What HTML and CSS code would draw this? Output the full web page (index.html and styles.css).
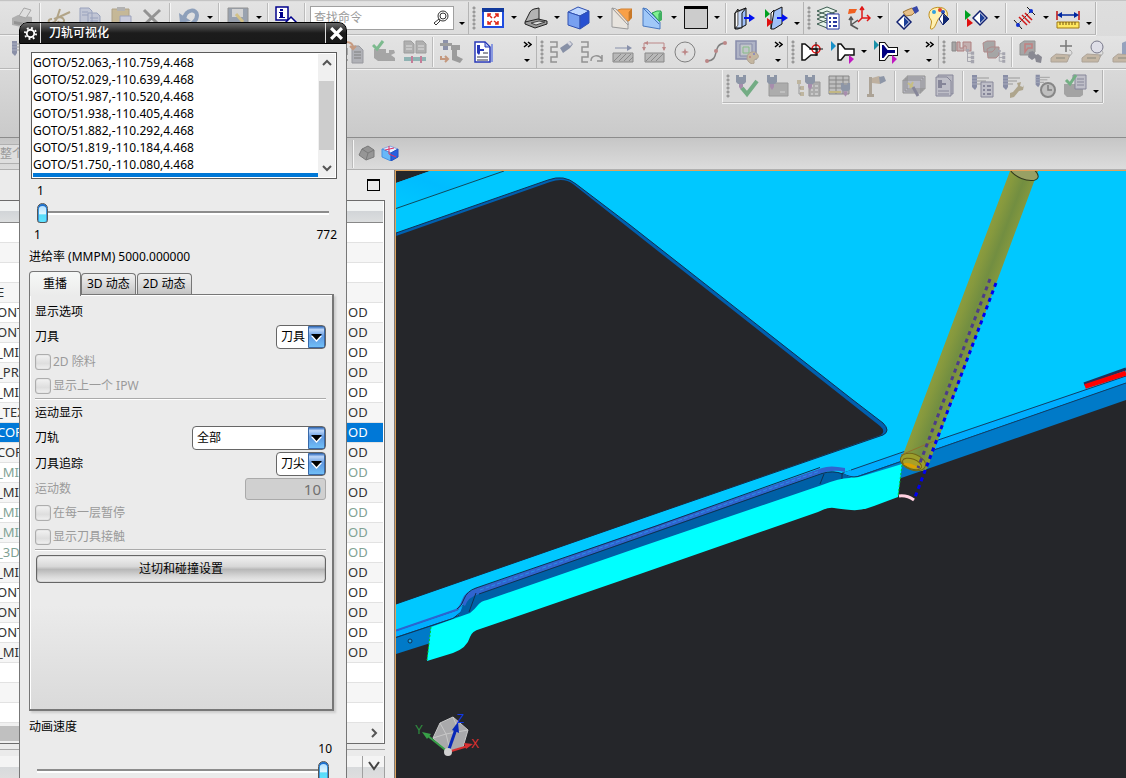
FILE: index.html
```
<!DOCTYPE html>
<html lang="zh-CN">
<head>
    <meta charset="UTF-8">
    <meta name="viewport" content="width=device-width, initial-scale=1.0">
    <title>刀轨可视化</title>
    <link rel="stylesheet" href="styles.css">
</head>
<body>
<svg class="defs" aria-hidden="true">
    <symbol id="caret" viewBox="0 0 6 4"><path d="M0 0h6L3 3z"/></symbol>
    <symbol id="more" viewBox="0 0 9 7"><path fill="none" stroke="#000" stroke-width="1.5" d="M1 1l3 2.500L1 6M5 1l3 2.500L5 6"/></symbol>
    <symbol id="mill" viewBox="0 0 24 24"><path fill="#506080" d="M1 1h3v2h4V1h3v7l-2 2H3L1 8z"/><path fill="#80508a" d="M4 10h4v3l-2 3-2-3z"/></symbol>
    <symbol id="spindle" viewBox="0 0 24 24"><path fill="#46507c" d="M2 1h5v12l-2 3-3-3z"/><path stroke="#8088a8" d="M2 4h5M2 7h5M2 10h5"/><path stroke="#666" d="M7 4h12M7 7h9M7 10h5"/></symbol>
    <symbol id="page" viewBox="0 0 24 24"><path fill="#8c8e98" stroke="#60626c" d="M2 1h7l4 4v13H2z"/><path stroke="#333" d="M4 7h7M4 10h7M4 13h7"/></symbol>
    <symbol id="snake" viewBox="0 0 24 24"><path fill="none" stroke="#555" stroke-width="1.5" d="M1 2h7v5H2v5h6v5H2v5h6"/></symbol>
    <symbol id="diamond" viewBox="0 0 24 24"><path fill="#fff" stroke="#102070" stroke-width="1.5" d="M8 1l7 7-7 7-7-7z"/><path fill="#1c3f98" d="M8 3l5 5-5 5z"/></symbol>
    <symbol id="tree" viewBox="0 0 24 24"><path fill="none" stroke="#667" d="M3 1v14M3 5h5M3 10h5M3 15h5"/><path fill="#778" d="M1 0h4v3H1zM7 3h4v4H7zM7 8h4v4H7zM7 13h4v4H7z"/></symbol>
    <symbol id="tag" viewBox="0 0 24 24"><path fill="#b09878" stroke="#867460" d="M1 18l5-4 14 1-3 7H1z"/><path stroke="#443" d="M6 18h9"/><path fill="none" stroke="#777" d="M18 16c6-1 4-6 1-6"/></symbol>
</svg>

<div class="app">
    <header class="toolbars">
        <div class="row">
            <div class="toolbar main">
                <button class="tool off" aria-label="打印"><svg viewBox="0 0 24 24"><path fill="#888" d="M2 12l6-3 14 2v6l-6 5-14-3z"/><path fill="#ddd" stroke="#777" d="M9 10l5-8 7 2-5 8z"/><path fill="#555" d="M4 15l11 2v3L4 18z"/></svg></button>
                <i class="sep"></i>
                <button class="tool off" aria-label="剪切"><svg viewBox="0 0 24 24"><path fill="none" stroke="#8c7440" stroke-width="2" d="M5 13c-5 0-4 5 0 4s4-3 5-5l3-9M10 12l13-6M7 13c5-3 9-2 10 1s-5 4-6 1"/></svg></button>
                <button class="tool off" aria-label="复制"><svg viewBox="0 0 24 24"><path fill="#a8b0cc" stroke="#6070a0" d="M2 2h9l3 3v12H2zM10 7h9l3 3v12H10z"/><path stroke="#6070a0" d="M4 6h6M4 9h6M12 12h8M12 15h8M12 18h8"/></svg></button>
                <button class="tool off" aria-label="粘贴"><svg viewBox="0 0 24 24"><path fill="#b0985c" stroke="#887040" d="M3 3h17v19H3z"/><path fill="#8c8c8c" d="M8 1h8v4H8z"/><path fill="#b8bcd8" stroke="#6670a0" d="M11 10h11v12H11z"/></svg></button>
                <button class="tool off" aria-label="删除"><svg viewBox="0 0 24 24"><path fill="none" stroke="#555" stroke-width="3" d="M4 4l15 15M20 4L4 19"/></svg></button>
                <i class="sep"></i>
                <button class="tool off" aria-label="撤销"><svg viewBox="0 0 24 24"><path fill="none" stroke="#4c6c9c" stroke-width="4" d="M7 13C9 2 20 3 20 9s-3 6-5 9"/><path fill="#4c6c9c" d="M2 7l12 8-11 2z"/></svg></button>
                <button class="caret" aria-label="更多"><svg><use href="#caret"/></svg></button>
                <i class="sep"></i>
                <button class="tool off" aria-label="保存"><svg viewBox="0 0 24 24"><path fill="#607088" stroke="#555" d="M2 2h20v20H2z"/><path fill="#c8c8c8" d="M6 3h11v8H6z"/><path stroke="#c8a840" stroke-width="3" d="M10 8l7 8"/></svg></button>
                <button class="caret" aria-label="更多"><svg><use href="#caret"/></svg></button>
                <i class="sep"></i>
                <button class="tool" aria-label="信息"><svg viewBox="0 0 24 24"><path fill="#fff" stroke="#00008c" stroke-width="1.5" d="M1 1h12v13H1z"/><path fill="#00008c" d="M5 3h3v2H5zM4 6h4v5h2v1H4v-1h1V7H4z"/><path fill="#fff" stroke="#00008c" stroke-width="1.5" d="M16 11l6 6-6 6-6-6z"/></svg></button>
                <i class="sep"></i>
                <label class="search"><input type="text" placeholder="查找命令" aria-label="查找命令"><svg viewBox="0 0 16 16"><circle cx="10" cy="6" r="5" fill="#fff" stroke="#333"/><circle cx="10" cy="6" r="3" fill="none" stroke="#333"/><path fill="#fff" stroke="#333" d="M6 9l1 2-4 4-2-2z"/></svg></label>
                <button class="caret low" aria-label="工具条选项"><svg><use href="#caret"/></svg></button>
            </div>
            <div class="toolbar">
                <i class="grip"></i>
                <button class="tool" aria-label="适合窗口"><svg viewBox="0 0 24 24"><path fill="#fff" stroke="#1f4de0" stroke-width="2" d="M2 3h20v18H2z"/><path fill="#123a9c" d="M1 2h22v4H1z"/><path fill="none" stroke="#e02818" stroke-width="1.5" d="M7 11V8h3M7 8l4 4M17 11V8h-3M17 8l-4 4M7 15v3h3M7 18l4-3M17 15v3h-3M17 18l-4-3"/></svg></button>
                <button class="caret" aria-label="更多"><svg><use href="#caret"/></svg></button>
                <button class="tool" aria-label="渲染样式"><svg viewBox="0 0 24 24"><path fill="#b4b4b4" stroke="#222" d="M1 16L6 6q1-2 4-3l5-1v12l-8 4z"/><path fill="#999" stroke="#222" d="M1 16l13-3 9 2v3l-12 4-10-4z"/><path fill="#ddd" stroke="#444" d="M7 17l8-2 6 1-9 3z"/></svg></button>
                <button class="caret" aria-label="更多"><svg><use href="#caret"/></svg></button>
                <button class="tool" aria-label="定向视图"><svg viewBox="0 0 24 24"><path fill="#c0d8ff" stroke="#3050b0" d="M1 6l10-5 11 4-9 5z"/><path fill="#78a0f0" stroke="#3050b0" d="M1 6l12 4v13L1 19z"/><path fill="#2850d0" stroke="#3050b0" d="M13 10l9-5v12l-9 6z"/></svg></button>
                <button class="caret" aria-label="更多"><svg><use href="#caret"/></svg></button>
                <button class="tool" aria-label="编辑截面"><svg viewBox="0 0 24 24"><path fill="#e8e4de" stroke="#999" d="M2 2l16 15v6L2 21z"/><path fill="#f8a048" stroke="#d08030" d="M5 5l6-2h11l-3 3v9h-4z"/><path fill="#c87828" d="M19 6l3-3v9l-3 3z"/><path fill="#fff" fill-opacity=".7" stroke="#999" d="M2 2l4 1 12 13v3z"/></svg></button>
                <button class="tool" aria-label="剪切截面"><svg viewBox="0 0 24 24"><path fill="#a0c8f8" stroke="#4878c0" d="M2 2l4 1 13 13v7L2 20z"/><path fill="#80f090" stroke="#28a050" d="M11 7l5-2h4l-2 3v7z"/><path fill="#40b060" d="M18 8l3-3v9l-3 2z"/><path fill="none" stroke="#4878c0" d="M2 2l16 16"/></svg></button>
                <button class="caret" aria-label="更多"><svg><use href="#caret"/></svg></button>
                <button class="tool" aria-label="背景"><svg viewBox="0 0 24 24"><path fill="#ccc" stroke="#111" d="M.5.5h23v22H.5z"/><path fill="#000" d="M0 0h24v3H0z"/></svg></button>
                <button class="caret" aria-label="更多"><svg><use href="#caret"/></svg></button>
                <i class="sep"></i>
                <button class="tool" aria-label="移动面"><svg viewBox="0 0 24 24"><path fill="#fff" stroke="#111" d="M2 7l3-4v16l-3 4z"/><path fill="#a0c0f8" stroke="#111" d="M5 6l8-4v17l-8 4H2L5 19z"/><path fill="#fff" stroke="#111" d="M2 7l3-2 8-3-4 5v15H2z" fill-opacity=".4"/><path stroke="#0010f0" stroke-width="2" d="M11 12h8"/><path fill="#0010f0" d="M16 8l6 4-6 4z"/></svg></button>
                <button class="tool" aria-label="替换面"><svg viewBox="0 0 24 24"><path fill="#fff" stroke="#111" d="M7 7l3-3v16l-3 3z"/><path fill="#a0c0f8" stroke="#111" d="M10 5l8-4v17l-8 5H7z"/><path stroke="#0010f0" stroke-width="2" d="M13 12h7"/><path fill="#0010f0" d="M18 8l6 4-6 4z"/><path fill="#00a020" d="M1 3l5 5-5 4z"/><path fill="#e01010" d="M3 12l6 4-6 5z"/></svg></button>
                <button class="caret low" aria-label="工具条选项"><svg><use href="#caret"/></svg></button>
            </div>
            <div class="toolbar">
                <i class="grip"></i>
                <button class="tool" aria-label="图层设置"><svg viewBox="0 0 24 24"><path fill="#e8f4ec" stroke="#3c5c50" d="M1 18l10-4 10 4-10 4zM1 13l10-4 10 4-10 4zM1 9l10-4 10 4-10 4zM1 5l10-4 10 4-10 4z"/><path fill="#fff" stroke="#2838a0" d="M11 8h12v15H11z"/><path stroke="#2838a0" stroke-width="2" d="M13 12h2M17 12h4M13 16h2M17 16h4M13 20h2M17 20h4"/></svg></button>
                <button class="tool" aria-label="坐标系"><svg viewBox="0 0 24 24"><path fill="none" stroke="#555" stroke-width="1.5" d="M4 11v8l7 4M4 19l7-5M2 14l2-3 2 3"/><path fill="none" stroke="#e01818" stroke-width="1.5" d="M15 2v10h8M15 12l-4 4M13 4l2-3 2 3M20 9l3 3-3 3"/><path fill="#f06020" d="M2 3h8l-2 4-7 1z"/></svg></button>
                <button class="caret" aria-label="更多"><svg><use href="#caret"/></svg></button>
                <i class="sep"></i>
                <button class="tool" aria-label="选择对象"><svg viewBox="0 0 24 24"><use href="#diamond" x="0" y="8" width="24" height="24"/><path fill="#e8c088" stroke="#a07838" d="M7 6l4-2 5-2 3 4-3 3-6 1z"/><path fill="#3848a8" d="M16 2l5-2 2 5-4 3z"/></svg></button>
                <button class="tool" aria-label="编辑对象显示"><svg viewBox="0 0 24 24"><path fill="#fff0b0" stroke="#c09020" d="M2 8C2 0 18-1 20 6s-4 6-7 6-4 10-8 11 1-6-1-9-2-3-2-6z"/><circle cx="7" cy="6" r="2" fill="#30a0e0"/><circle cx="13" cy="4" r="2" fill="#e04030"/><circle cx="16" cy="6" r="2" fill="#2850c0"/><path fill="#fff" stroke="#102070" d="M16 7l6 6-6 6-4-6z"/><path fill="#102870" d="M16 8l6 5-6 6z"/></svg></button>
                <i class="sep"></i>
                <button class="tool" aria-label="显示和隐藏"><svg viewBox="0 0 24 24"><path fill="#00a020" d="M1 4l6 5-6 5z"/><path fill="#e01010" d="M3 12l6 5-6 4z"/><use href="#diamond" x="8" y="4" width="24" height="24"/></svg></button>
                <button class="caret" aria-label="更多"><svg><use href="#caret"/></svg></button>
                <i class="sep"></i>
                <button class="tool" aria-label="测量距离"><svg viewBox="0 0 24 24"><path stroke="#111" d="M1 14l8 9M14 1l8 8"/><path stroke="#111" stroke-dasharray="2 1" d="M5 18L18 5"/><path stroke="#d01818" stroke-width="1.5" d="M6 11l8 8M9 9l8 8M12 7l7 7"/><circle cx="5" cy="19" r="2" fill="#1030d0"/><circle cx="18" cy="5" r="2" fill="#1030d0"/></svg></button>
                <button class="caret" aria-label="更多"><svg><use href="#caret"/></svg></button>
                <button class="tool" aria-label="测量"><svg viewBox="0 0 24 24"><path stroke="#c01010" stroke-width="1.5" d="M1 5v9M23 5v9"/><path stroke="#0028a0" stroke-width="1.5" d="M3 9h18"/><path fill="#0028a0" d="M1 9l5-3v6zM23 9l-5-3v6z"/><path fill="#ffe860" stroke="#a07810" d="M1 16h22v6H1z"/><path stroke="#705010" d="M4 16v3M7 16v3M10 16v3M13 16v3M16 16v3M19 16v3"/></svg></button>
                <button class="caret low" aria-label="工具条选项"><svg><use href="#caret"/></svg></button>
            </div>
        </div>

        <div class="row">
            <div class="toolbar operations">
                <button class="tool off" aria-label="创建刀具"><svg viewBox="0 0 24 24"><use href="#spindle" x="6" width="24" height="24"/></svg></button>
                <i class="fill"></i>
                <button class="tool off" aria-label="生成刀轨"><svg viewBox="0 0 24 24"><use href="#page" x="9" y="5" width="24" height="24"/><path fill="none" stroke="#b06030" stroke-width="2" d="M5 2q7 0 7 6M9 6l3 3 3-3"/><path fill="none" stroke="#777" stroke-width="2" d="M1 9h5v5H2v6h5"/></svg></button>
                <button class="tool off" aria-label="确认刀轨"><svg viewBox="0 0 24 24"><path fill="#777" d="M2 9h12v4h3v-3h5l1 3-4 2 4 3v3H6l-4-3z"/><path fill="none" stroke="#2c9c4c" stroke-width="3" d="M1 5l4 4 6-8"/></svg></button>
                <button class="tool off" aria-label="后处理"><svg viewBox="0 0 24 24"><path fill="#888" stroke="#666" d="M1 1h7l3 3v9H1zM13 1h7l3 3v9H13z"/><path stroke="#ddd" d="M3 6h6M3 9h6M15 6h6M15 9h6"/><path stroke="#509090" stroke-width="4" d="M1 19h22"/><path stroke="#b03060" stroke-width="2" d="M9 16v7M18 16v7"/></svg></button>
                <i class="sep"></i>
                <button class="tool off" aria-label="机床仿真"><svg viewBox="0 0 24 24"><path fill="#46507c" d="M3 0h5v10H3z"/><path fill="#666" d="M0 3h12v3H0zM11 5h9v5h-3v6l6 3-3 4-8-3V10h-1z"/><path fill="none" stroke="#b06030" stroke-width="2" d="M1 16v3h7M5 16l3 3-3 3"/></svg></button>
                <button class="tool" aria-label="车间文档"><svg viewBox="0 0 24 24"><path fill="#fff" stroke="#2838b8" stroke-width="1.5" d="M4 2h10l5 5v15H4z"/><path stroke="#8898e0" stroke-width="2" d="M21 4v18"/><path fill="#b0c0f0" stroke="#2838b8" d="M14 2v5h5z"/><path fill="#2838b8" d="M6 5h3v8l-1 2-2-2zM9 9h4v2H9z"/><path stroke="#334" d="M12 13h5M6 17h11M6 20h11"/></svg></button>
                <button class="overflow" aria-label="更多工具"><svg class="more"><use href="#more"/></svg><svg><use href="#caret"/></svg></button>
            </div>
            <div class="toolbar">
                <i class="grip"></i>
                <button class="tool off" aria-label="指定点"><svg viewBox="0 0 24 24"><use href="#snake" width="24" height="24"/><path fill="#405078" d="M11 8l6-4 4-3 3 3-3 4-7 5z"/><path fill="#d0d0e0" d="M20 1l3 3-2 2-3-3z"/></svg></button>
                <button class="tool off" aria-label="重播"><svg viewBox="0 0 24 24"><use href="#snake" width="24" height="24"/><path fill="none" stroke="#555" stroke-width="1.5" d="M11 21c0-6 8-7 11-2M22 15v6h-5"/></svg></button>
                <button class="tool off" aria-label="切削方向"><svg viewBox="0 0 24 24"><path fill="#999" stroke="#444" d="M2 13h20v9H2z"/><path stroke="#444" d="M3 21l7-7M8 21l7-7M13 21l7-7M18 21l4-4"/><path stroke="#405080" d="M4 8h15"/><path fill="#405080" d="M16 5l5 3-5 3z"/></svg></button>
                <button class="tool off" aria-label="切削范围"><svg viewBox="0 0 24 24"><path fill="#999" stroke="#444" d="M3 13h19v9H3z"/><path stroke="#444" d="M4 21l7-7M9 21l7-7M14 21l7-7"/><path fill="none" stroke="#a04040" d="M2 10V3h20v7"/><path fill="#a04040" d="M0 7h4l-2 4zM20 7h4l-2 4zM6 1v4L2 3z"/></svg></button>
                <button class="tool off" aria-label="圆心"><svg viewBox="0 0 24 24"><circle cx="12" cy="12" r="10" fill="none" stroke="#333"/><path fill="#a04040" d="M12 8l1 3 3 1-3 1-1 3-1-3-3-1 3-1z"/></svg></button>
                <button class="tool off" aria-label="样条"><svg viewBox="0 0 24 24"><path fill="none" stroke="#333" stroke-width="1.5" d="M3 21c14 0 4-17 18-18"/><circle cx="3" cy="21" r="2" fill="#a04040"/><circle cx="12" cy="11" r="2" fill="#a04040"/><circle cx="21" cy="3" r="2" fill="#a04040"/></svg></button>
                <button class="tool off" aria-label="显示颜色"><svg viewBox="0 0 24 24"><path fill="#8890b0" stroke="#404880" stroke-width="1.5" d="M1 1h20v18H1z"/><path fill="#a8b0b8" stroke="#404880" d="M5 4h12v12H5z"/><path stroke="#40a040" d="M8 7h6v6H8z"/><path fill="#b09870" stroke="#887050" d="M12 18c0-7 9-8 11-3s-5 3-4 7-7 1-7-4z"/><circle cx="15" cy="17" r="1" fill="#a33"/><circle cx="19" cy="14" r="1" fill="#33a"/></svg></button>
                <button class="overflow" aria-label="更多工具"><svg class="more"><use href="#more"/></svg><svg><use href="#caret"/></svg></button>
            </div>
            <div class="toolbar">
                <i class="grip"></i>
                <button class="tool" aria-label="指定刀柄"><svg viewBox="0 0 24 24"><path fill="#fff" stroke="#111" stroke-width="1.5" d="M2 4h3l6 5h6v6h-6l-6 5H2z"/><circle cx="16" cy="9" r="4" fill="none" stroke="#e01010" stroke-width="1.5"/><path stroke="#111" d="M16 2v14M9 9h14"/></svg></button>
                <button class="tool" aria-label="刀柄方向"><svg viewBox="0 0 24 24"><path fill="#fff" stroke="#111" stroke-width="1.5" d="M7 4h3l4 5h9v6h-9l-4 5H7z"/><path fill="#1890c8" d="M0 1l5 5-5 5z"/><path fill="#c018c0" d="M18 15l5 4-5 5z"/></svg></button>
                <button class="caret" aria-label="更多"><svg><use href="#caret"/></svg></button>
                <button class="tool" aria-label="刀具显示"><svg viewBox="0 0 24 24"><path stroke="#111" stroke-width="4" d="M7 4h3l4 5h8v5h-8l-4 5H7z"/><path fill="#000080" stroke="#fff" stroke-width="2" d="M7 4h3l4 5h8v5h-8l-4 5H7z"/><path fill="#1890a8" d="M0 0l5 5-5 5z"/><path fill="#c018c0" d="M18 15l5 4-5 5z"/></svg></button>
                <button class="caret" aria-label="更多"><svg><use href="#caret"/></svg></button>
                <button class="overflow" aria-label="更多工具"><svg class="more"><use href="#more"/></svg><svg><use href="#caret"/></svg></button>
            </div>
            <div class="toolbar rest">
                <i class="grip"></i>
                <button class="tool off" aria-label="工件"><svg viewBox="0 0 24 24"><path fill="#777" stroke="#444" d="M1 2h4v9H1z"/><path fill="#a88" stroke="#833" d="M6 2h3v6h3V2h8v9h-5V6h-2v5H6z"/><use href="#tree" x="14" y="9" width="20" height="20"/></svg></button>
                <button class="tool off" aria-label="几何体"><svg viewBox="0 0 24 24"><path fill="#777" stroke="#844" d="M1 3l4-2h8v8l-3 3H2zM5 9l4-2h8v8l-3 3H6z"/><use href="#tree" x="15" y="10" width="18" height="18"/></svg></button>
                <i class="sep"></i>
                <button class="tool off" aria-label="查看几何体"><svg viewBox="0 0 24 24"><path fill="#777" stroke="#555" d="M1 4l4-3h11v11l-3 3H1z"/><path fill="none" stroke="#a33" stroke-width="1.5" d="M6 4h7v4H9l-3 4z"/><path fill="#445" d="M10 12l4-1 3 4 2-1 4 3-1 6-5-1-1-4-3 2-4-3z"/></svg></button>
                <button class="tool off" aria-label="添加特征"><svg viewBox="0 0 24 24"><use href="#tag" width="24" height="24"/><path stroke="#222" stroke-width="1.5" d="M16 0v12M10 6h12"/></svg></button>
                <button class="tool off" aria-label="查找特征"><svg viewBox="0 0 24 24"><use href="#tag" width="24" height="24"/><circle cx="16" cy="7" r="6" fill="#dde" stroke="#224"/></svg></button>
                <button class="tool off" aria-label="编组特征"><svg viewBox="0 0 24 24"><use href="#tag" width="24" height="24"/><path fill="#5870a0" d="M10 3q7-4 14 0v11H10z"/></svg></button>
            </div>
        </div>

        <div class="row">
            <div class="toolbar third">
                <i class="grip"></i>
                <button class="tool off" aria-label="检查刀具"><svg viewBox="0 0 24 24"><use href="#mill" width="24" height="24"/><path fill="none" stroke="#208840" stroke-width="4" d="M7 14l5 6L22 7"/></svg></button>
                <button class="tool off" aria-label="刀具文件夹"><svg viewBox="0 0 24 24"><path fill="#888" stroke="#666" d="M3 9h19v13H3z"/><use href="#mill" width="24" height="24"/><path fill="none" stroke="#ccc" d="M14 18h5"/></svg></button>
                <button class="tool off" aria-label="刀具结构"><svg viewBox="0 0 24 24"><path fill="#888" stroke="#666" d="M12 8h11v14H12z"/><path stroke="#eee" d="M14 12h2M18 12h3M14 16h2M18 16h3M14 20h2M18 20h3"/><use href="#mill" x="7" width="24" height="24"/><path fill="#a89870" d="M0 6h4v4H0zM3 12h4v4H3zM3 18h4v4H3z"/><path fill="none" stroke="#666" d="M2 10v10h2M2 14h2"/></svg></button>
                <button class="tool off" aria-label="刀具列表"><svg viewBox="0 0 24 24"><path fill="#a8a8a8" stroke="#444" d="M1 2h20v18H1z"/><path stroke="#444" d="M1 6h20M1 10h20M1 14h20M8 2v18M15 2v18"/><path stroke="#b09c40" stroke-width="2" d="M1 18h12"/><use href="#mill" x="12" y="8" width="22" height="22"/></svg></button>
                <i class="sep"></i>
                <button class="tool off" aria-label="标记"><svg viewBox="0 0 24 24"><path fill="#887860" d="M4 3h3v17h2v3H2v-3h2z"/><path fill="#a89070" d="M7 4l7-2 4 3-3 5-8-1z"/><path fill="#506080" d="M14 3l5-1 2 5-6 3z"/></svg></button>
                <i class="sep"></i>
                <button class="tool off" aria-label="批量"><svg viewBox="0 0 24 24"><path fill="#a0a0b4" stroke="#555" d="M5 2h18v13H5zM3 4h18v13H3zM1 6h18v13H1z"/><path stroke="#b8a840" stroke-width="2" d="M6 9l5 4M11 8l-3 6"/><path stroke="#446" stroke-width="3" d="M11 13l5 9"/></svg></button>
                <button class="tool off" aria-label="报告"><svg viewBox="0 0 24 24"><path fill="#99a" stroke="#446" d="M5 1h15v19H5z"/><path fill="#aab" stroke="#446" d="M3 3h11l4 4v15H3z"/><path fill="#446" d="M5 6h4v8H5zM9 9h4v2H9z"/><path stroke="#446" d="M5 17h11M5 20h11"/></svg></button>
                <i class="sep"></i>
                <button class="tool off" aria-label="操作列表"><svg viewBox="0 0 24 24"><use href="#spindle" width="24" height="24"/><path fill="#aab" stroke="#446" d="M11 8h12v15H11z"/><path stroke="#446" stroke-width="2" d="M13 12h2M17 12h4M13 16h2M17 16h4M13 20h2M17 20h4"/></svg></button>
                <button class="tool off" aria-label="操作设置"><svg viewBox="0 0 24 24"><use href="#spindle" width="24" height="24"/><path fill="#8c7c50" d="M9 19l3-1 5-6-1-3 4-1-1 4 3 1 1-2-1 5-4 1-5 6-4 1z"/></svg></button>
                <button class="tool off" aria-label="操作时间"><svg viewBox="0 0 24 24"><use href="#spindle" width="24" height="20"/><circle cx="16" cy="16" r="7" fill="#aaa" stroke="#444" stroke-width="2"/><path fill="none" stroke="#333" stroke-width="1.5" d="M16 11v5h4"/></svg></button>
                <button class="tool off" aria-label="确认文档"><svg viewBox="0 0 24 24"><path fill="#777" d="M1 10h14v5h5v6l-3 2H4l-3-3z"/><path fill="#aab" stroke="#446" d="M10 1h13v14H12V4h-2z"/><path stroke="#446" d="M14 5h7M14 8h7M14 11h7"/><path fill="none" stroke="#209040" stroke-width="3" d="M3 6l4 4 6-9"/></svg></button>
                <button class="caret low" aria-label="工具条选项"><svg><use href="#caret"/></svg></button>
            </div>
        </div>
    </header>

    <div class="selection-bar">
        <select class="scope" disabled aria-label="选择范围"><option>整个装配</option></select>
        <i class="sep"></i>
        <button class="small-tool off" aria-label="实体"><svg viewBox="0 0 18 16"><path fill="#666" stroke="#333" d="M1 10l3-6 6-3 6 4v7l-8 3z"/><path fill="none" stroke="#333" d="M4 4l6 4-2 7M10 8l6-3"/></svg></button>
        <button class="small-tool" aria-label="着色"><svg viewBox="0 0 18 16"><path fill="#e8f0ff" stroke="#88a8e0" d="M1 4l8-3 8 3-7 4z"/><path fill="#68b8f8" stroke="#4890e0" d="M1 4l9 4v8l-9-4z"/><path fill="#2860e0" stroke="#2050c0" d="M10 8l7-4v8l-7 4z"/><path fill="none" stroke="#e03060" d="M8 1v8l7 3M4 5l9-2"/></svg></button>
    </div>

    <main class="workspace">
        <aside class="navigator">
            <div class="nav-title"><button class="maximize" aria-label="最大化"></button></div>
            <div class="nav-grid">
                <table>
                    <thead><tr><th></th><th></th></tr></thead>
                    <tbody>
                        <tr><td></td><td></td></tr>
                        <tr><td></td><td></td></tr>
                        <tr><td></td><td></td></tr>
                        <tr><td>E</td><td></td></tr>
                        <tr><td>ONT</td><td>OD</td></tr>
                        <tr><td>ONT</td><td>OD</td></tr>
                        <tr><td>_MI</td><td>OD</td></tr>
                        <tr><td>_PRO</td><td>OD</td></tr>
                        <tr><td>_MI</td><td>OD</td></tr>
                        <tr><td>_TEX</td><td>OD</td></tr>
                        <tr class="selected"><td>COR</td><td>OD</td></tr>
                        <tr><td>COR</td><td>OD</td></tr>
                        <tr class="muted"><td>_MI</td><td>OD</td></tr>
                        <tr><td>_MI</td><td>OD</td></tr>
                        <tr class="muted"><td>_MI</td><td>OD</td></tr>
                        <tr class="muted"><td>_MI</td><td>OD</td></tr>
                        <tr class="muted"><td>_3D</td><td>OD</td></tr>
                        <tr><td>_MI</td><td>OD</td></tr>
                        <tr><td>ONT</td><td>OD</td></tr>
                        <tr><td>ONT</td><td>OD</td></tr>
                        <tr><td>ONT</td><td>OD</td></tr>
                        <tr><td>_MI</td><td>OD</td></tr>
                        <tr><td></td><td></td></tr>
                        <tr><td></td><td></td></tr>
                        <tr><td></td><td></td></tr>
                    </tbody>
                </table>
                <div class="hscroll"><i></i><svg viewBox="0 0 8 10"><path d="M2 1l4 4-4 4"/></svg></div>
            </div>
            <div class="nav-section">
                <div class="section-head"><button aria-label="展开"><svg viewBox="0 0 12 10"><path d="M1 1l5 7 5-7"/></svg></button></div>
            </div>
        </aside>

        <section class="viewport">
            <svg class="scene" viewBox="396 171 730 607" preserveAspectRatio="xMinYMin slice" role="img" aria-label="工件">
                <defs>
                    <linearGradient id="shank" gradientUnits="userSpaceOnUse" x1="950" y1="318" x2="979" y2="329">
                        <stop offset="0" stop-color="#919f3b"/><stop offset=".3" stop-color="#86993e"/><stop offset=".65" stop-color="#728e41"/><stop offset="1" stop-color="#84983e"/>
                    </linearGradient>
                    <linearGradient id="flange" x1="0" x2="1" y1="1" y2="0">
                        <stop offset="0" stop-color="#00c8ff"/><stop offset=".5" stop-color="#00bcff"/><stop offset="1" stop-color="#00c8ff"/>
                    </linearGradient>
                </defs>
                <!-- plate -->
                <path fill="#00c8ff" d="M396 183L430 171H1126V376L900 454 845 472 474 589 460 609 396 631z"/>
                <path fill="url(#flange)" d="M396 183L430 171H504L396 208z"/>
                <path fill="none" stroke="#10495c" d="M396 208.500L504 171"/>
                <!-- side bands -->
                <path fill="#00adff" d="M1126 376L845 472 830 484 858 476 1126 383z"/>
                <path fill="#007ac8" d="M1126 383L858 476V493L1126 400z"/>
                <path fill="none" stroke="#103f68" d="M1126 376L900 453 851 470M1126 383L858 476.500Q850 478 842 473"/>
                <path fill="#00adff" d="M396 631L458 610 474 596 480 604 453 618 396 637z"/>
                <path fill="#007ac8" d="M396 637L471 612 440 640 396 654z"/>
                <path fill="none" stroke="#103050" d="M396 637.500L453 618.500 466 608 471 598 481 592"/>
                <path fill="none" stroke="#2c64d0" stroke-width="2" d="M396 630.500L456 610Q460 608 463 600T477 590"/>
                <!-- slot wall -->
                <path fill="#0060a6" d="M458 618L463 605Q467 594 478 592L822 473Q833 469 846 475L852 478 846 488 480 610z"/>
                <path fill="#3064cf" d="M462 604Q465 592 477 588L640 531 822 468Q830 465 845 468V472Q834 469 822 473L640 537 479 594Q468 597 465 606z"/>
                <path fill="none" stroke="#103050" d="M457 609Q462 606 464 599 467 591 476 588L656 526 820 467.500M479 594L640 537.500 822 473.500Q833 470 843 474M476 593L469 612M824 474L820 484M842 473V479"/>
                <path fill="none" stroke="#2890e8" stroke-dasharray="4 2" d="M480 590L640 534 820 471"/>
                <circle cx="410" cy="641" r="2" fill="#20a8e8" stroke="#103050"/>
                <!-- window -->
                <path fill="#0060b0" stroke="#103050" d="M396 233L548 180Q564 174 576 184L630 225 853 400 883 423Q891 431 883 435L640 519 396 604z"/>
                <path fill="#25262a" d="M396 236L550 182Q564 177 573 184L630 229 847 400 880 426Q886 431 881 435L640 519 396 604z"/>
                <!-- swept tool path -->
                <path fill="#0ff" d="M431 627L470 613Q475 609 478 605T487 600L640 547 822 485Q840 478 849 478T866 475L902 464 898 497 874 506Q862 511 851 510T834 508 818 512L640 574 480 629Q472 631 470 637 467 648 453 653L427 661z"/>
                <path fill="none" stroke="#00d020" stroke-dasharray="2 2" d="M431 627L427 660M902 465L898 496"/>
                <!-- red pad -->
                <path stroke="#203058" stroke-width="3" d="M1084 384L1126 369"/>
                <path stroke="#f00" stroke-width="5" d="M1085 386.500L1126 373"/>
                <!-- cutter -->
                <path fill="url(#shank)" d="M1010 171L901 460Q902 470 922 471 928 470 929 464L1038 171z"/>
                <ellipse cx="1024" cy="172" rx="15" ry="7" transform="rotate(22 1024 172)" fill="#98a064" stroke="#30381c"/>
                <ellipse cx="913" cy="462" rx="13" ry="8" transform="rotate(20 913 462)" fill="#9c9e2c" stroke="#706818"/>
                <ellipse cx="912" cy="464" rx="10" ry="5" transform="rotate(20 912 464)" fill="#a8a028" stroke="#706010"/>
                <path fill="#dca000" d="M903 464q5-3 16 4-9 1-16-4z"/>
                <path fill="none" stroke="#92702c" d="M901 455L934 441"/>
                <path stroke="#4c3c88" stroke-width="3" stroke-dasharray="4 4" d="M990 279L918 468"/>
                <path stroke="#0000f0" stroke-width="3" stroke-dasharray="4 4" d="M996 283L914 500"/>
                <path fill="none" stroke="#ffd0e0" stroke-width="3" d="M899 496q8-1 15 4"/>
                <!-- view triad -->
                <path fill="#a9a9ab" stroke="#c8c8c8" d="M440 723L453 717 468 730 463 747 448 752 433 738z"/>
                <path fill="none" stroke="#c8c8c8" d="M433 738L446 734 468 730M446 734L440 723M446 734L450 750M453 717L458 729"/>
                <path stroke="#38a048" stroke-width="2" d="M448 752L428 736"/><path fill="#38a048" d="M422 732l9 2-4 5z"/>
                <path stroke="#d83030" stroke-width="2" d="M448 752L468 746"/><path fill="#d83030" d="M473 744l-9-1 2 6z"/>
                <path stroke="#0828b8" stroke-width="3" d="M448 752L456 729"/><path fill="#0828b8" d="M458 722l-6 8 7 3z"/>
                <circle cx="448" cy="752" r="4" fill="#d0d0d0"/>
                <text class="axis z" x="457" y="723">Z</text>
                <text class="axis y" x="415" y="734">Y</text>
                <text class="axis x" x="471" y="748">X</text>
            </svg>
        </section>
    </main>
</div>

<div class="dialog" role="dialog" aria-labelledby="dialog-title">
    <div class="dialog-head">
        <button class="head-btn gear" aria-label="选项"><svg viewBox="0 0 14 14"><circle cx="7" cy="7" r="4" fill="none" stroke="#fff" stroke-width="2"/><circle cx="7" cy="7" r="6" fill="none" stroke="#fff" stroke-width="2" stroke-dasharray="2 2.700"/></svg></button>
        <h1 id="dialog-title">刀轨可视化</h1>
        <button class="head-btn close" aria-label="关闭"><svg viewBox="0 0 12 12"><path stroke="#fff" stroke-width="3" d="M1 1l10 10M11 1L1 11"/></svg></button>
    </div>
    <div class="dialog-body">
        <div class="listbox">
            <ul>
                <li>GOTO/52.063,-110.759,4.468</li>
                <li>GOTO/52.029,-110.639,4.468</li>
                <li>GOTO/51.987,-110.520,4.468</li>
                <li>GOTO/51.938,-110.405,4.468</li>
                <li>GOTO/51.882,-110.292,4.468</li>
                <li>GOTO/51.819,-110.184,4.468</li>
                <li>GOTO/51.750,-110.080,4.468</li>
                <li class="current"></li>
            </ul>
            <div class="vscroll">
                <svg viewBox="0 0 10 8"><path d="M1 6l4-4 4 4"/></svg>
                <i></i>
                <svg viewBox="0 0 10 8"><path d="M1 2l4 4 4-4"/></svg>
            </div>
        </div>
        <output class="value start">1</output>
        <input class="slider" type="range" min="1" max="772" value="1" aria-label="刀轨位置">
        <div class="range"><span>1</span><span>772</span></div>
        <p class="feed">进给率 (MMPM) 5000.000000</p>

        <div class="tabs" role="tablist">
            <button class="tab active" role="tab" aria-selected="true">重播</button>
            <button class="tab" role="tab">3D 动态</button>
            <button class="tab" role="tab">2D 动态</button>
        </div>
        <div class="panel" role="tabpanel">
            <h2 class="line">显示选项</h2>
            <div class="line field"><label for="tool">刀具</label><select id="tool" class="short"><option>刀具</option></select></div>
            <label class="line check"><input type="checkbox" disabled>2D 除料</label>
            <label class="line check"><input type="checkbox" disabled>显示上一个 IPW</label>
            <hr>
            <h2 class="line">运动显示</h2>
            <div class="line field"><label for="path">刀轨</label><select id="path" class="long"><option>全部</option></select></div>
            <div class="line field"><label for="trace">刀具追踪</label><select id="trace" class="short"><option>刀尖</option></select></div>
            <div class="line disabled"><label for="count">运动数</label><input id="count" type="text" value="10" disabled></div>
            <label class="line check"><input type="checkbox" disabled>在每一层暂停</label>
            <label class="line check"><input type="checkbox" disabled>显示刀具接触</label>
            <hr>
            <button class="settings">过切和碰撞设置</button>
        </div>

        <label class="speed" for="speed">动画速度</label>
        <output class="value end">10</output>
        <input id="speed" class="slider" type="range" min="1" max="10" value="10">
    </div>
</div>
</body>
</html>
```
FILE: styles.css
```
* {
    box-sizing: border-box;
}
body {
    margin: 0;
    overflow: hidden;
    font: 12px/16px "Noto Sans", "Noto Sans CJK SC", sans-serif;
    color: #000;
    background: #ebebeb;
}
button, input, select {
    margin: 0;
    padding: 0;
    font: inherit;
    color: inherit;
}
button {
    border: 0;
    background: none;
}
.defs {
    position: absolute;
    width: 0;
    height: 0;
}
.app {
    display: flex;
    flex-direction: column;
    height: 100vh;
}

/* toolbars */
.toolbars {
    flex: none;
    min-height: 137px;
    padding-top: 1px;
    overflow: hidden;
    background: linear-gradient(#dedede, #d9d9d9 50%, #cacaca);
    border-top: 1px solid #c4c4c4;
}
.row {
    display: flex;
}
.toolbar {
    display: flex;
    flex: none;
    align-items: center;
    height: 33px;
    margin-bottom: 1px;
    background: linear-gradient(#e3e3e3, #dcdcdc);
    border-right: 1px solid #b4b4b4;
    border-bottom: 1px solid #b8b8b8;
    box-shadow: 0 1px #f2f2f2, 1px 0 #f2f2f2;
}
.main {
    padding-left: 6px;
}
.operations {
    width: 537px;
}
.rest {
    flex: 1;
    overflow: hidden;
    border-right: 0;
}
.third {
    margin-left: 722px;
    border-left: 1px solid #f4f4f4;
    background: #d9d9d9;
}
.tool {
    display: flex;
    flex: none;
    justify-content: center;
    width: 31px;
}
.tool svg {
    width: 24px;
    height: 24px;
    fill: none;
}
.off svg {
    opacity: .55;
}
.caret, .overflow {
    display: flex;
    flex: none;
    align-items: center;
    justify-content: center;
    width: 12px;
    height: 24px;
}
.caret svg, .overflow svg {
    width: 6px;
    height: 4px;
}
.caret.low {
    align-items: flex-end;
    padding-bottom: 4px;
}
.overflow {
    flex-direction: column;
    justify-content: space-between;
    width: 18px;
    height: 22px;
    margin-left: 7px;
}
.overflow .more {
    width: 9px;
    height: 7px;
}
.operations .overflow {
    margin-left: auto;
}
.sep {
    flex: none;
    width: 2px;
    height: 30px;
    margin: 0 2px;
    border-left: 1px solid #bbb;
    background: #f6f6f6;
}
.fill {
    width: 306px;
}
.grip {
    flex: none;
    width: 8px;
    height: 24px;
    background: radial-gradient(circle, #999 0 1px, transparent 2px) 2px 0 / 6px 4px repeat-y;
}
.search {
    display: flex;
    align-items: center;
    width: 144px;
    height: 24px;
    margin: 0 2px;
    padding: 0 4px 0 3px;
    background: #fff;
    border: 1px solid #a0a0a0;
}
.search input {
    flex: 1;
    min-width: 0;
    border: 0;
    outline: 0;
}
.search input::placeholder {
    color: #9a9a9a;
}
.search svg {
    width: 16px;
    height: 16px;
}
.selection-bar {
    display: flex;
    flex: none;
    align-items: center;
    height: 33px;
    background: linear-gradient(#c6c6c6, #dcdcdc);
    border-top: 1px solid #8c8c8c;
    border-bottom: 1px solid #b0b0b0;
}
.selection-bar .sep {
    height: 28px;
    margin: 0 1px 0 12px;
}
.scope {
    width: 340px;
    height: 20px;
    appearance: none;
    color: #999;
    background: #dedede;
    border: 1px solid #b0b0b0;
    border-left: 0;
    opacity: 1;
}
.small-tool {
    width: 23px;
    height: 18px;
}
.small-tool svg {
    width: 18px;
    height: 16px;
}

/* operation navigator */
.workspace {
    display: flex;
    flex: 1;
    min-height: 0;
}
.navigator {
    flex: none;
    width: 395px;
    overflow: hidden;
    border-right: 1px solid #7c7c7c;
}
.nav-title {
    display: flex;
    align-items: center;
    justify-content: flex-end;
    height: 30px;
    padding-right: 14px;
}
.maximize {
    width: 13px;
    height: 12px;
    border: 1px solid #000;
    border-top-width: 2px;
}
.nav-grid {
    width: 385px;
    border: 1px solid #6c6c6c;
    border-width: 1px 1px 1px 0;
    padding-right: 1px;
    background: #fff;
}
.nav-grid table {
    width: 100%;
    table-layout: fixed;
    border-collapse: collapse;
    font-size: 13px;
    color: #333;
}
.nav-grid th {
    height: 21px;
    padding: 0;
    background: linear-gradient(#f0f2f2 50%, #d2d5d8 50%, #dcdedf);
    border-bottom: 1px solid #888;
}
.nav-grid th:first-child {
    width: 347px;
}
.nav-grid td {
    height: 20px;
    padding: 0 0 0 1px;
    line-height: 18px;
    border-bottom: 1px solid #e2e2e2;
}
/* the name column is scrolled a little to the left */
.nav-grid td:first-child {
    text-indent: -4px;
}
.nav-grid tbody tr:nth-child(even) {
    background: #f6f6f6;
}
.nav-grid .muted {
    color: #7fa294;
}
.nav-grid tbody .selected {
    color: #fff;
    background: #0078d7;
}
.hscroll {
    display: flex;
    align-items: center;
    justify-content: space-between;
    height: 20px;
    padding: 2px 4px 1px 0;
    background: #f0f0f0;
}
.hscroll i {
    width: 200px;
    height: 15px;
    background: #c0c0c0;
}
.hscroll svg, .vscroll svg {
    width: 10px;
    height: 10px;
    fill: none;
    stroke: #555;
    stroke-width: 2;
}
.nav-section {
    width: 385px;
    margin-top: 5px;
    padding-top: 6px;
    border-top: 1px solid #a8a8a8;
}
.section-head {
    display: flex;
    justify-content: flex-end;
    height: 22px;
    background: linear-gradient(#f4f4f4 50%, #d8dadc 50%, #dedede);
}
.section-head button {
    width: 23px;
    border: 1px solid #a0a0a0;
    border-width: 0 1px;
}
.section-head svg {
    width: 12px;
    height: 10px;
    fill: none;
    stroke: #444;
    stroke-width: 2;
}

/* graphics window */
.viewport {
    flex: 1;
    min-width: 0;
    background: #25262a;
    border-top: 1px solid #e0a45c;
    border-left: 1px solid #e0a45c;
}
.scene {
    display: block;
    width: 100%;
    height: 100%;
}
.axis {
    font: 12px "Liberation Sans", sans-serif;
}
.x {
    fill: #e03030;
}
.y {
    fill: #309040;
}
.z {
    fill: #1038e8;
}

/* floating dialog */
.dialog {
    position: absolute;
    top: 22px;
    left: 19px;
    width: 328px;
    height: calc(100vh - 22px);
    overflow: hidden;
    border-radius: 8px 8px 0 0;
    background: #ebebeb;
}
.dialog-head {
    display: flex;
    height: 22px;
    color: #fff;
    border: 1px solid #000;
    border-radius: 8px 8px 0 0;
    background: linear-gradient(#686868, #3a3a3a 30%, #1c1c1c 50%, #1a1a1a);
}
.dialog-head h1 {
    flex: 1;
    margin: 0;
    padding-left: 8px;
    font-size: 12px;
    font-weight: 500;
    line-height: 20px;
}
.head-btn {
    display: flex;
    align-items: center;
    justify-content: center;
    width: 21px;
    border: 0 solid #ddd;
}
.head-btn svg {
    width: 13px;
    height: 13px;
}
.gear {
    border-right-width: 1px;
}
.close {
    border-left-width: 1px;
}
.dialog-body {
    display: flex;
    flex-direction: column;
    min-height: 100%;
    padding: 8px 9px 0;
    border: 1px solid #777;
    border-width: 0 1px;
}
.listbox {
    display: flex;
    height: 127px;
    margin-left: 2px;
    padding: 1px;
    background: #fff;
    border: 1px solid #5c5c5c;
}
.listbox ul {
    flex: 1;
    margin: 0;
    padding: 0;
    overflow: hidden;
    list-style: none;
}
.listbox li {
    height: 17px;
    line-height: 17px;
}
.listbox .current {
    background: #0078d7;
}
.vscroll {
    display: flex;
    flex-direction: column;
    align-items: center;
    justify-content: space-between;
    width: 17px;
    padding: 4px 1px;
    background: #f0f0f0;
}
.vscroll i {
    width: 15px;
    height: 69px;
    background: #cdcdcd;
}
.value {
    height: 22px;
    padding: 4px 8px 0;
}
.value.end {
    height: 18px;
    padding: 0 5px;
    text-align: right;
}
.slider {
    height: 24px;
    margin: 0 8px;
    appearance: none;
    background: none;
}
.slider::-webkit-slider-runnable-track {
    height: 4px;
    background: linear-gradient(#8c8c8c 50%, #fff 50%);
}
.slider::-webkit-slider-thumb {
    width: 11px;
    height: 20px;
    margin-top: -8px;
    appearance: none;
    border: 1px solid #555;
    border-radius: 6px 6px 3px 3px;
    background: linear-gradient(#a8dcff, #e0f6ff 55%, #58dcf8 60%, #60e4ff);
    box-shadow: inset 0 2px #1c70d0, inset 1px 0 #3c98dc, inset -1px 0 #3c98dc;
}
.range {
    display: flex;
    justify-content: space-between;
    height: 18px;
    padding-left: 5px;
    line-height: 20px;
}
.feed {
    margin: 0;
    line-height: 28px;
}
.tabs {
    display: flex;
    align-items: flex-end;
    height: 23px;
}
.tab {
    height: 21px;
    margin-right: 1px;
    padding: 0 5px;
    border: 1px solid #777;
    border-bottom: 0;
    border-radius: 4px 4px 0 0;
    background: linear-gradient(#f0f0f0, #dcdcdc 50%, #c4c4c4);
}
.tab.active {
    z-index: 1;
    width: 52px;
    height: 25px;
    margin: 0 0 -2px;
    background: linear-gradient(#f6f8f7, #ebebeb);
}
.panel {
    display: flex;
    flex-direction: column;
    height: 417px;
    margin-right: 3px;
    padding: 5px 6px 0 5px;
    border: 1px solid #777;
    border-width: 1px 2px 2px 1px;
    background: linear-gradient(#ebebeb 75%, #dadada);
    box-shadow: inset 1px 1px #fff, 2px 2px 2px #ccc;
}
.line {
    display: flex;
    flex: none;
    align-items: center;
    justify-content: space-between;
    height: 24px;
    margin: 0;
    font-size: 12px;
    font-weight: normal;
}
.field {
    height: 26px;
}
.check {
    justify-content: flex-start;
    gap: 2px;
}
.check, .disabled {
    color: #9a9a9a;
}
.check input {
    width: 16px;
    height: 16px;
    appearance: none;
    border: 1px solid #adadad;
    border-radius: 3px;
    background: linear-gradient(#f2f2f2, #dedede 60%, #f0f0f0);
    box-shadow: inset 0 0 1px #999;
}
.panel select {
    height: 24px;
    padding: 0 18px 0 4px;
    appearance: none;
    border: 1px solid #666;
    border-radius: 4px;
    background: url("data:image/svg+xml,%3Csvg xmlns='http://www.w3.org/2000/svg' viewBox='0 0 17 22'%3E%3ClinearGradient id='a' x2='0' y2='1'%3E%3Cstop stop-color='%232868c0'/%3E%3Cstop offset='.15' stop-color='%23c0d8f8'/%3E%3Cstop offset='.45' stop-color='%236098e0'/%3E%3Cstop offset='1' stop-color='%2370c0f8'/%3E%3C/linearGradient%3E%3Cpath fill='url(%23a)' stroke='%233868a8' d='M.5.5h16v21H.5z'/%3E%3Cpath fill='%23fff' d='M3 10h11l-5.500 6z'/%3E%3Cpath d='M3 8h11l-5.500 6z'/%3E%3C/svg%3E") right 0 / 17px 22px no-repeat #fff;
}
.panel .short {
    width: 50px;
}
.panel .long {
    width: 134px;
}
.disabled input {
    width: 81px;
    height: 22px;
    padding-right: 4px;
    font-size: 15px;
    text-align: right;
    color: #707070;
    border: 1px solid #aaa;
    border-radius: 3px;
    background: #d0d0d0;
}
.panel hr {
    width: 100%;
    height: 2px;
    margin: 0 0 1px;
    border: 0;
    border-top: 1px solid #aaa;
    background: #fff;
}
.settings {
    height: 28px;
    margin: 3px 0 0 1px;
    border: 1px solid #666;
    border-radius: 4px;
    background: linear-gradient(#f2f2f2, #d8d8d8 40%, #b8b8b8 52%, #dadada 80%, #ececec);
    box-shadow: inset 0 0 1px #333;
}
.speed {
    margin-top: 2px;
    line-height: 28px;
}
```
